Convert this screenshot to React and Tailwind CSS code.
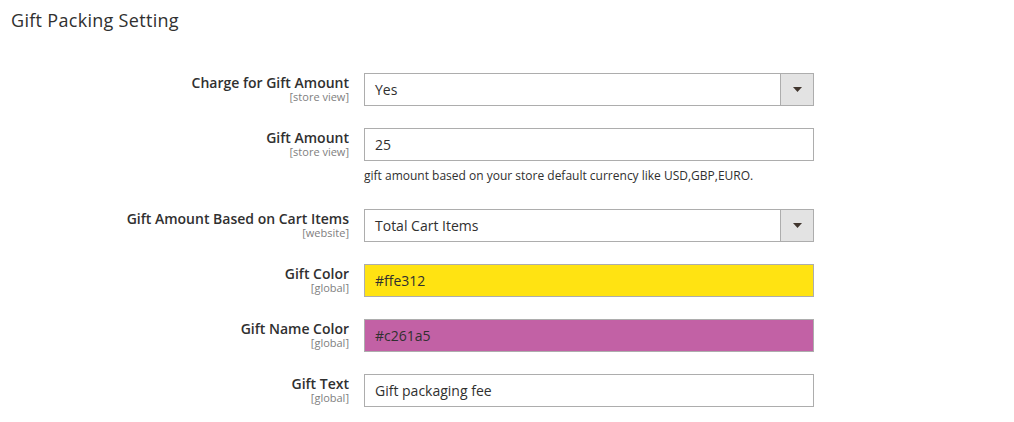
const rows = [
  { label: "Charge for Gift Amount", scope: "[store view]", type: "select", value: "Yes" },
  {
    label: "Gift Amount",
    scope: "[store view]",
    type: "text",
    value: "25",
    note: "gift amount based on your store default currency like USD,GBP,EURO.",
  },
  { label: "Gift Amount Based on Cart Items", scope: "[website]", type: "select", value: "Total Cart Items" },
  { label: "Gift Color", scope: "[global]", type: "color", value: "#ffe312", bg: "bg-[#ffe312]" },
  { label: "Gift Name Color", scope: "[global]", type: "color", value: "#c261a5", bg: "bg-[#c261a5]" },
  { label: "Gift Text", scope: "[global]", type: "text", value: "Gift packaging fee" },
];

const Field = ({ row }) => {
  if (row.type === "select") {
    return (
      <div className="flex h-[33px] w-[450px] border border-[#adadad] bg-white">
        <div className="flex-1 flex items-center pl-[10px] text-[14px] text-[#303030]">{row.value}</div>
        <div className="w-[33px] flex items-center justify-center bg-[#e3e3e3] border-l border-[#adadad]">
          <svg width="9" height="5" viewBox="0 0 9 5">
            <path d="M0 0 L9 0 L4.5 5 Z" fill="#41362f" />
          </svg>
        </div>
      </div>
    );
  }
  return (
    <div
      className={`flex items-center h-[33px] w-[450px] border border-[#adadad] pl-[10px] text-[14px] text-[#303030] ${
        row.bg || "bg-white"
      }`}
    >
      {row.value}
    </div>
  );
};

const App = () => {
  return (
    <div className="min-h-screen bg-white font-['Open_Sans',sans-serif] text-[#303030]">
      <h2 className="pl-[11px] pt-[9px] text-[18px] leading-[22px] font-medium tracking-[0.3px] text-[#303030]">
        Gift Packing Setting
      </h2>

      <div className="mt-[42px] flex flex-col gap-[22px]">
        {rows.map((row) => (
          <div key={row.label} className="flex">
            <div className="w-[349px] text-right pt-[2px]">
              <div className="text-[14px] leading-[16px] font-semibold text-[#303030]">{row.label}</div>
              <div className="text-[11px] leading-[12px] text-[#808080]">{row.scope}</div>
            </div>
            <div className="ml-[15px]">
              <Field row={row} />
              {row.note && (
                <div className="mt-[8px] text-[12px] leading-[14px] text-[#303030] mb-[4px]">{row.note}</div>
              )}
            </div>
          </div>
        ))}
      </div>
    </div>
  );
};

export default App;
